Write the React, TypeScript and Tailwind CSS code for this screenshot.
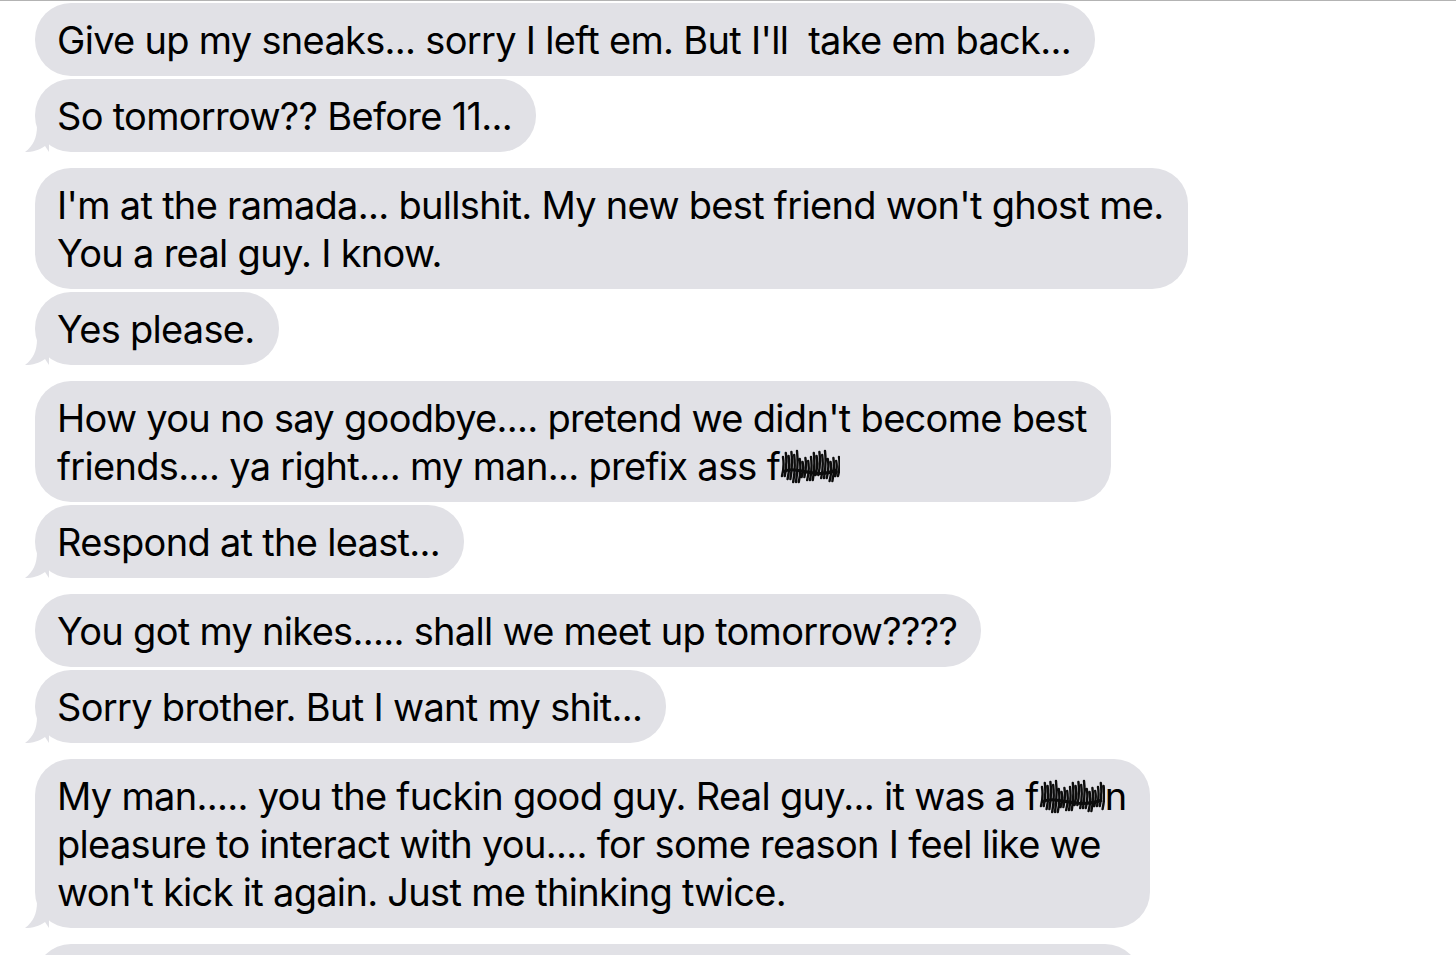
import type { ReactNode } from 'react'

// squiggly black censor marks, like a finger scribble over the word
function Scribble({ width }: { width: number }) {
  const strokes: string[] = []
  for (let x = 2; x < width - 2; x += 2.8) {
    const top = 5 + ((Math.round(x * 3) * 7) % 12)
    const bottom = 36 - ((Math.round(x * 3) * 5) % 8)
    strokes.push(`M${x.toFixed(1)} ${bottom} Q${(x + 2.5).toFixed(1)} ${(top + bottom) / 2} ${(x + 1).toFixed(1)} ${top}`)
  }
  return (
    <svg width={width} height={42} viewBox={`0 0 ${width} 42`} className="inline-block align-[-8px]">
      <path d={strokes.join(' ')} stroke="#0c0c0c" strokeWidth={2.4} strokeLinecap="round" fill="none" />
      <path
        d={`M3 26 C${width * 0.25} 18 ${width * 0.55} 34 ${width - 3} 24`}
        stroke="#0c0c0c"
        strokeWidth={3}
        fill="none"
      />
    </svg>
  )
}

function Tail() {
  return (
    <svg width={24} height={26} viewBox="0 0 24 26" className="absolute -left-[10px] bottom-0">
      <path d="M12 0 C12 12 8 20 0 26 C8 26 14 24 20 20 L24 26 L24 0 Z" fill="#e1e1e6" />
    </svg>
  )
}

interface Msg {
  body?: ReactNode
  tail?: boolean
  gapBefore?: boolean
}

const MESSAGES: Msg[] = [
  { body: "Give up my sneaks... sorry I left em. But I'll\u00a0 take em back..." },
  { body: 'So tomorrow?? Before 11...', tail: true },
  {
    body: (
      <>
        I'm at the ramada... bullshit. My new best friend won't ghost me.
        <br />
        You a real guy. I know.
      </>
    ),
    gapBefore: true,
  },
  { body: 'Yes please.', tail: true },
  {
    body: (
      <>
        How you no say goodbye.... pretend we didn't become best
        <br />
        friends.... ya right.... my man... prefix ass f<Scribble width={60} />
      </>
    ),
    gapBefore: true,
  },
  { body: 'Respond at the least...', tail: true },
  { body: 'You got my nikes..... shall we meet up tomorrow????', gapBefore: true },
  { body: 'Sorry brother. But I want my shit...', tail: true },
  {
    body: (
      <>
        My man..... you the fuckin good guy. Real guy... it was a f<Scribble width={66} />n
        <br />
        pleasure to interact with you.... for some reason I feel like we
        <br />
        won't kick it again. Just me thinking twice.
      </>
    ),
    tail: true,
    gapBefore: true,
  },
  // next message is cut off by the bottom of the screenshot
  { gapBefore: true },
]

export default function App() {
  return (
    <div className="w-[1456px] h-[955px] overflow-hidden bg-white border-t border-[#b3b3b3] pl-[35px] pt-[2px] font-['Inter','Liberation_Sans',sans-serif] text-black">
      <div className="flex flex-col items-start">
        {MESSAGES.map((m, i) => (
          <div
            key={i}
            className={`relative rounded-[36px] bg-[#e1e1e6] pl-[22px] pr-[24px] py-[12.5px] text-[38px] leading-[48px] tracking-[-0.7px] ${
              m.body ? 'w-fit' : 'w-[1106px] h-[73px]'
            } ${i === 0 ? '' : m.gapBefore ? 'mt-[16px]' : 'mt-[3px]'}`}
          >
            {m.tail && <Tail />}
            {m.body && <span className="relative whitespace-nowrap">{m.body}</span>}
          </div>
        ))}
      </div>
    </div>
  )
}
